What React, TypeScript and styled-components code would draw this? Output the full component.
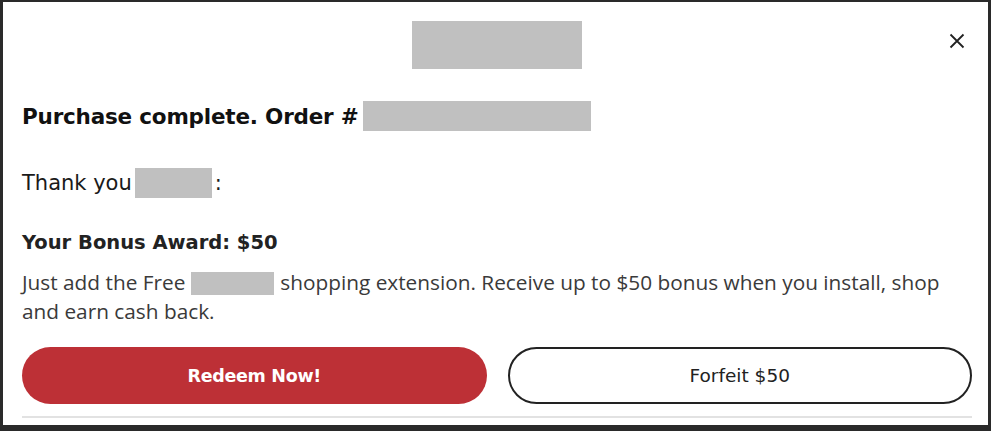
import React from "react";
import styled, { createGlobalStyle } from "styled-components";

const Global = createGlobalStyle`
  html, body { margin: 0; padding: 0; background: #2a2a2a; }
  * { box-sizing: border-box; }
`;

const Frame = styled.div`
  width: 991px;
  height: 431px;
  border-style: solid;
  border-color: #2a2a2a;
  border-width: 2px 3px 6px 3px;
  background: #fff;
  display: flex;
  flex-direction: column;
  padding: 19px 16px 0 19px;
  position: relative;
`;

const LogoRow = styled.div`
  display: flex;
  justify-content: center;
`;

const Redacted = styled.span<{ w: number; h: number }>`
  display: inline-block;
  flex: none;
  width: ${(p) => p.w}px;
  height: ${(p) => p.h}px;
  background: #c0c0c0;
  vertical-align: middle;
`;

const InlineRedacted = styled(Redacted)`
  vertical-align: -5px;
  margin: 0 6px 0 6px;
`;

const Close = styled.button`
  position: absolute;
  top: 28px;
  right: 20px;
  width: 22px;
  height: 22px;
  border: none;
  background: none;
  padding: 0;
  display: flex;
  align-items: center;
  justify-content: center;
`;

const Heading = styled.h1`
  margin: 31px 0 0;
  font-family: "DejaVu Sans", sans-serif;
  font-weight: 700;
  font-size: 21.5px;
  letter-spacing: -0.2px;
  color: #111;
  display: flex;
  align-items: center;
  gap: 4px;
  height: 32px;
`;

const Thanks = styled.p`
  margin: 36px 0 0;
  font-family: "DejaVu Sans", sans-serif;
  font-size: 21px;
  color: #1a1a1a;
  display: flex;
  align-items: center;
  gap: 3px;
  height: 30px;
`;

const Bonus = styled.h2`
  margin: 32px 0 0;
  font-family: "DejaVu Sans", sans-serif;
  font-weight: 700;
  font-size: 19.5px;
  color: #222;
  height: 26px;
  line-height: 26px;
`;

const Body = styled.p`
  margin: 12px 0 0;
  font-family: "Open Sans", sans-serif;
  font-size: 20.8px;
  line-height: 29px;
  color: #3a3a3a;
  padding-right: 22px;
`;

const Buttons = styled.div`
  display: grid;
  grid-template-columns: 1fr 1fr;
  gap: 21px;
  margin-top: 21px;
`;

const Btn = styled.button<{ primary?: boolean }>`
  height: 57px;
  border-radius: 29px;
  font-family: "DejaVu Sans", sans-serif;
  font-size: ${(p) => (p.primary ? "17.5px" : "18.5px")};
  font-weight: ${(p) => (p.primary ? 700 : 400)};
  letter-spacing: ${(p) => (p.primary ? "-0.3px" : "0")};
  color: ${(p) => (p.primary ? "#fff" : "#222")};
  background: ${(p) => (p.primary ? "#bd3036" : "#fff")};
  border: ${(p) => (p.primary ? "none" : "2px solid #222")};
`;

const Divider = styled.hr`
  margin: 12px 0 0;
  border: none;
  border-top: 2px solid #e2e2e2;
`;

export default function App() {
  return (
    <>
      <Global />
      <Frame>
        <LogoRow>
          <Redacted w={170} h={48} />
        </LogoRow>
        <Close aria-label="Close">
          <svg width="16" height="16" viewBox="0 0 16 16">
            <path d="M1.5 1.5 L14.5 14.5 M14.5 1.5 L1.5 14.5" stroke="#222" strokeWidth="1.8" />
          </svg>
        </Close>
        <Heading>
          Purchase complete. Order #<Redacted w={228} h={30} />
        </Heading>
        <Thanks>
          Thank you<Redacted w={77} h={30} />:
        </Thanks>
        <Bonus>Your Bonus Award: $50</Bonus>
        <Body>
          Just add the Free<InlineRedacted w={83} h={23} />shopping extension. Receive up to $50 bonus when you install, shop and earn cash back.
        </Body>
        <Buttons>
          <Btn primary>Redeem Now!</Btn>
          <Btn>Forfeit $50</Btn>
        </Buttons>
        <Divider />
      </Frame>
    </>
  );
}
